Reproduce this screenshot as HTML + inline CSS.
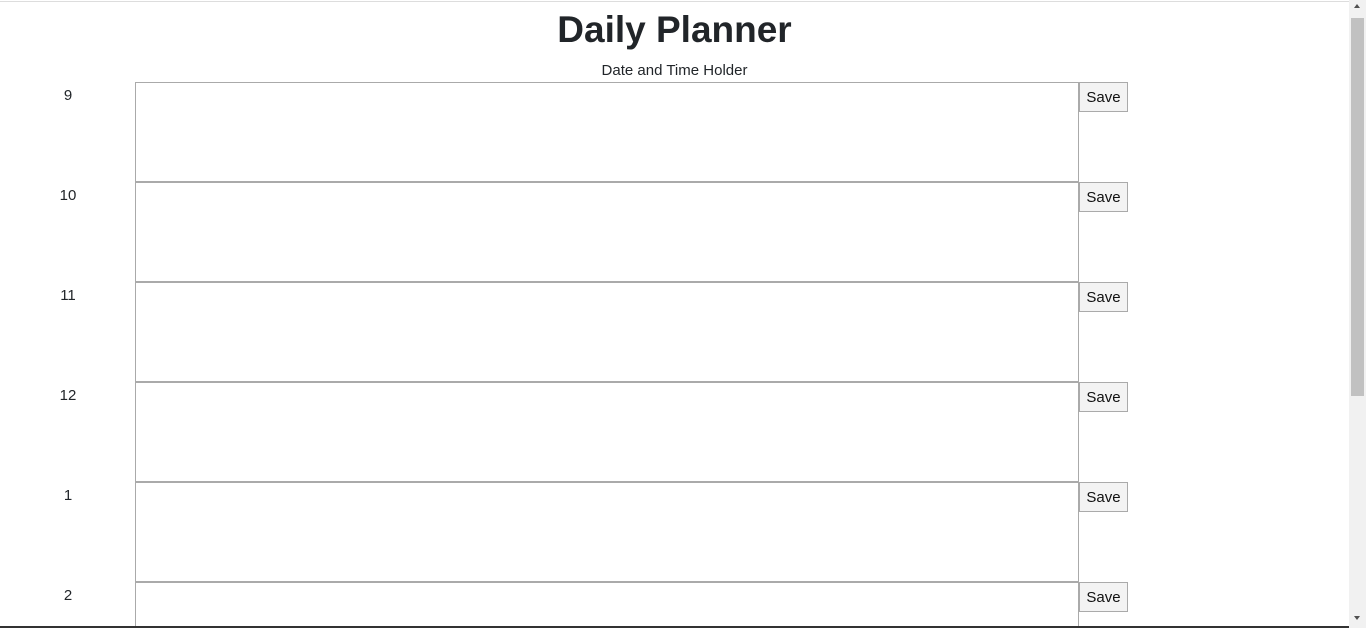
<!DOCTYPE html>
<html><head><style>
html,body{margin:0;padding:0;width:1366px;height:628px;overflow:hidden;background:#fff;font-family:"Liberation Sans",sans-serif;color:#212529}
#wrap{position:relative;width:1366px;height:628px;overflow:hidden}
.top{position:absolute;left:0;top:0;width:1349px;height:2px;border-bottom:1px solid #ddd;box-sizing:border-box}
h1{position:absolute;left:0;width:1349px;top:8px;margin:0;text-align:center;font-size:37px;font-weight:bold;line-height:44px}
.sub{position:absolute;left:0;width:1349px;top:62px;text-align:center;font-size:15px;line-height:18px}
.row{position:absolute;left:0;height:100px;width:1349px}
.hr{position:absolute;left:40px;width:56px;top:5px;text-align:center;font-size:15px;line-height:18px}
.ta{position:absolute;left:135px;top:0;width:944px;height:100px;border:1px solid #aaa;box-sizing:border-box;background:#fff}
.btn{position:absolute;left:1079px;top:0;width:49px;height:30px;border:1px solid #aaa;box-sizing:border-box;background:#f3f3f3;font-size:15px;line-height:30px;text-align:center;color:#111}
.sb{position:absolute;left:1349px;top:0;width:17px;height:628px;background:#f1f1f1}
.th{position:absolute;left:1351px;top:18px;width:13px;height:378px;background:#c1c1c1}
.bot{position:absolute;left:0;top:626px;width:1349px;height:2px;background:#333}
</style></head><body><div id="wrap">
<div class="top"></div>
<h1>Daily Planner</h1>
<div class="sub">Date and Time Holder</div>
<div class="row" style="top:82px"><div class="hr">9</div><div class="ta"></div><div class="btn">Save</div></div>
<div class="row" style="top:182px"><div class="hr">10</div><div class="ta"></div><div class="btn">Save</div></div>
<div class="row" style="top:282px"><div class="hr">11</div><div class="ta"></div><div class="btn">Save</div></div>
<div class="row" style="top:382px"><div class="hr">12</div><div class="ta"></div><div class="btn">Save</div></div>
<div class="row" style="top:482px"><div class="hr">1</div><div class="ta"></div><div class="btn">Save</div></div>
<div class="row" style="top:582px;height:46px;overflow:hidden"><div class="hr">2</div><div class="ta"></div><div class="btn">Save</div></div>
<div class="bot"></div>
<div class="sb"><div style="position:absolute;left:5px;top:4px;border-left:3px solid transparent;border-right:3px solid transparent;border-bottom:4px solid #505050"></div><div style="position:absolute;left:5px;top:616px;border-left:3px solid transparent;border-right:3px solid transparent;border-top:4px solid #505050"></div></div>
<div class="th"></div>
</div></body></html>
